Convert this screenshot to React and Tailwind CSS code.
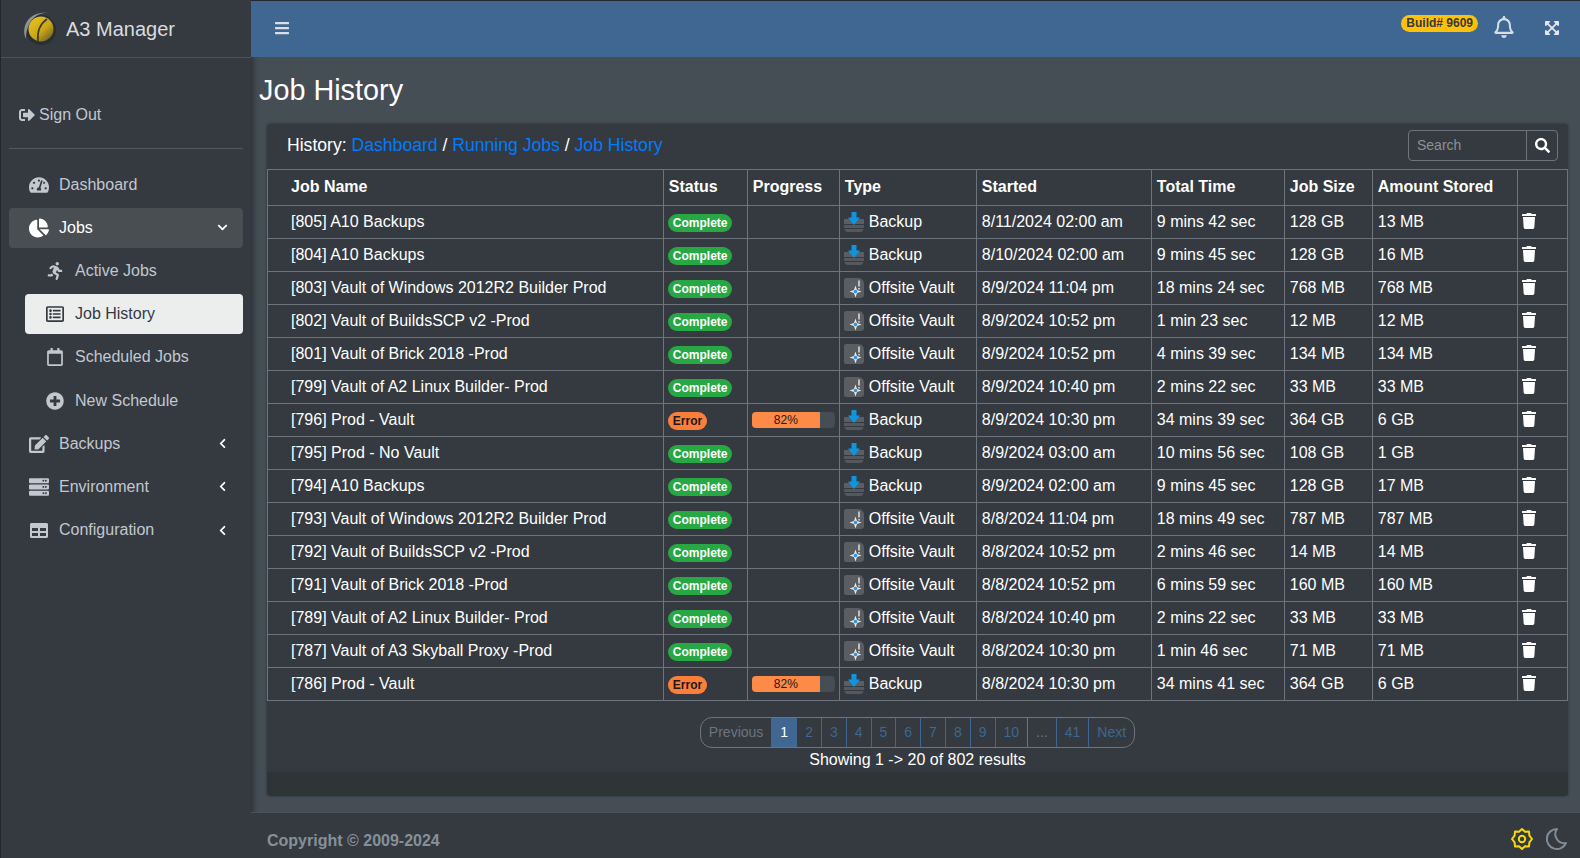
import {
  FaBars,
  FaChartPie,
  FaChevronDown,
  FaChevronLeft,
  FaEdit,
  FaExpandArrowsAlt,
  FaPlusCircle,
  FaRegBell,
  FaRegCalendar,
  FaRegListAlt,
  FaRunning,
  FaSearch,
  FaServer,
  FaSignOutAlt,
  FaTachometerAlt,
  FaTrash,
} from "react-icons/fa";

const jobs = [
  ["[805] A10 Backups", "Complete", "Backup", "8/11/2024 02:00 am", "9 mins 42 sec", "128 GB", "13 MB"],
  ["[804] A10 Backups", "Complete", "Backup", "8/10/2024 02:00 am", "9 mins 45 sec", "128 GB", "16 MB"],
  ["[803] Vault of Windows 2012R2 Builder Prod", "Complete", "Offsite Vault", "8/9/2024 11:04 pm", "18 mins 24 sec", "768 MB", "768 MB"],
  ["[802] Vault of BuildsSCP v2 -Prod", "Complete", "Offsite Vault", "8/9/2024 10:52 pm", "1 min 23 sec", "12 MB", "12 MB"],
  ["[801] Vault of Brick 2018 -Prod", "Complete", "Offsite Vault", "8/9/2024 10:52 pm", "4 mins 39 sec", "134 MB", "134 MB"],
  ["[799] Vault of A2 Linux Builder- Prod", "Complete", "Offsite Vault", "8/9/2024 10:40 pm", "2 mins 22 sec", "33 MB", "33 MB"],
  ["[796] Prod - Vault", "Error", "Backup", "8/9/2024 10:30 pm", "34 mins 39 sec", "364 GB", "6 GB"],
  ["[795] Prod - No Vault", "Complete", "Backup", "8/9/2024 03:00 am", "10 mins 56 sec", "108 GB", "1 GB"],
  ["[794] A10 Backups", "Complete", "Backup", "8/9/2024 02:00 am", "9 mins 45 sec", "128 GB", "17 MB"],
  ["[793] Vault of Windows 2012R2 Builder Prod", "Complete", "Offsite Vault", "8/8/2024 11:04 pm", "18 mins 49 sec", "787 MB", "787 MB"],
  ["[792] Vault of BuildsSCP v2 -Prod", "Complete", "Offsite Vault", "8/8/2024 10:52 pm", "2 mins 46 sec", "14 MB", "14 MB"],
  ["[791] Vault of Brick 2018 -Prod", "Complete", "Offsite Vault", "8/8/2024 10:52 pm", "6 mins 59 sec", "160 MB", "160 MB"],
  ["[789] Vault of A2 Linux Builder- Prod", "Complete", "Offsite Vault", "8/8/2024 10:40 pm", "2 mins 22 sec", "33 MB", "33 MB"],
  ["[787] Vault of A3 Skyball Proxy -Prod", "Complete", "Offsite Vault", "8/8/2024 10:30 pm", "1 min 46 sec", "71 MB", "71 MB"],
  ["[786] Prod - Vault", "Error", "Backup", "8/8/2024 10:30 pm", "34 mins 41 sec", "364 GB", "6 GB"],
];

const headers = ["Job Name", "Status", "Progress", "Type", "Started", "Total Time", "Job Size", "Amount Stored", ""];
const pages = ["1", "2", "3", "4", "5", "6", "7", "8", "9", "10", "...", "41"];

const Logo = () => (
  <svg width="38" height="38" viewBox="0 0 38 38">
    <defs>
      <linearGradient id="disc" x1="0.2" y1="0.1" x2="0.9" y2="0.9">
        <stop offset="0" stopColor="#e3c01c" />
        <stop offset="0.55" stopColor="#c9a518" />
        <stop offset="1" stopColor="#6f6426" />
      </linearGradient>
    </defs>
    <circle cx="21" cy="20" r="15" fill="#23272b" opacity="0.6" />
    <circle cx="21" cy="19" r="12.500" fill="url(#disc)" />
    <path d="M6 29C0 16 10 0 28 3C16 2 6 12 6 29z" fill="#8f9296" />
    <path d="M18 31c-1-9 2-17 9-22" fill="none" stroke="#3f3c2a" strokeWidth="1.600" />
  </svg>
);

const BackupIcon = () => (
  <svg width="20" height="20" viewBox="0 0 20 20" className="shrink-0">
    <path d="M1 7h18c.6 0 1 .4 1 1v4H0V8c0-.6.4-1 1-1z" fill="#5b5f63" />
    <path d="M0 13h20v3H0z" fill="#55595d" />
    <path d="M0.500 17h19c-.4 1.800-1.500 3-3 3h-13c-1.500 0-2.600-1.200-3-3z" fill="#55595d" />
    <path d="M7.500 0h5v5.500H16L10 13 4 5.500h3.500z" fill="#0f94df" />
  </svg>
);

const VaultIcon = () => (
  <svg width="20" height="20" viewBox="0 0 20 20" className="shrink-0">
    <path d="M2 0h12c4 0 6 3 6 6v11c0 2-1 3-3 3H2c-1 0-2-1-2-2V2C0 1 1 0 2 0z" fill="#5a5d61" />
    <path d="M15 2.500v6" stroke="#dfe1e3" strokeWidth="1.500" />
    <path d="M15 10v1.500" stroke="#dfe1e3" strokeWidth="1.500" />
    <path d="M11.500 7.500l1.500 4.500 4.500 1.500-4.500 1.500-1.500 4.500-1.500-4.500-4.500-1.500 4.500-1.500z" fill="#e8ebee" />
    <circle cx="11.500" cy="13.500" r="1.800" fill="#2f93e0" />
  </svg>
);

const TableIcon = ({ className }) => (
  <svg viewBox="0 0 18 15" className={className} width="18" height="15">
    <path
      fillRule="evenodd"
      d="M1.500 0h15c.8 0 1.500.7 1.500 1.500v12c0 .8-.7 1.500-1.500 1.500h-15C.7 15 0 14.300 0 13.500v-12C0 .7.700 0 1.500 0zM2 5v3h6V5zm8 0v3h6V5zM2 10v3h6v-3zm8 0v3h6v-3z"
      fill="currentColor"
    />
  </svg>
);

const Gear = () => (
  <svg width="24" height="24" viewBox="0 0 24 24" fill="none" stroke="#f5d90a" strokeWidth="2">
    <path d="M12 2l3 2.800 4-.2.400 4 2.600 3.400-2.600 3.400-.400 4-4-.2L12 22l-3-2.800-4 .2-.400-4L2 12l2.600-3.400.400-4 4 .2z" strokeLinejoin="round" />
    <circle cx="12" cy="12" r="3.200" />
  </svg>
);

const Moon = () => (
  <svg width="24" height="24" viewBox="0 0 24 24" fill="none" stroke="#7f8c97" strokeWidth="2">
    <path d="M13 2a10 10 0 1 0 9 14A9 9 0 0 1 13 2z" strokeLinejoin="round" />
  </svg>
);

const SideItem = ({ icon: Icon, label, open, active, arrow }) => (
  <div
    className={`mb-[3.2px] flex h-10 items-center rounded pl-[19px] pr-[15px] ${active ? "bg-[#494e53] text-white" : "text-[#c2c7d0]"}`}
  >
    <span className="flex w-[22px] shrink-0 justify-center text-[20px]">
      <Icon />
    </span>
    <span className="ml-[9px] flex-1">{label}</span>
    {arrow && (open ? <FaChevronDown className="text-[11px] text-white" /> : <FaChevronLeft className="text-[11px] text-white" />)}
  </div>
);

const SubItem = ({ icon: Icon, label, active }) => (
  <div
    className={`mb-[3.2px] ml-4 flex h-10 items-center rounded pl-5 ${active ? "bg-[#eceeee] text-[#343a40]" : "text-[#c2c7d0]"}`}
  >
    <Icon className="w-[20px] shrink-0 text-[18px]" />
    <span className="ml-[10px]">{label}</span>
  </div>
);

const Sidebar = () => (
  <aside className="flex w-[251px] shrink-0 flex-col border-l border-[#24282c] bg-[#343a40] shadow-[2px_0_6px_rgba(0,0,0,0.4)]">
    <div className="flex h-[58px] items-center border-b border-[#4b545c] pl-[19px]">
      <Logo />
      <span className="ml-[8px] text-[20px] text-[#d9dcdf]">A3 Manager</span>
    </div>
    <div className="mx-2 flex h-[91px] items-center border-b border-[#4f5962] pl-[10px] pt-[24px] text-[#c2c7d0]">
      <FaSignOutAlt className="text-[16px]" />
      <span className="ml-[4px]">Sign Out</span>
    </div>
    <nav className="mx-2 mt-[15.6px]">
      <SideItem icon={FaTachometerAlt} label="Dashboard" />
      <SideItem icon={FaChartPie} label="Jobs" active arrow open />
      <SubItem icon={FaRunning} label="Active Jobs" />
      <SubItem icon={FaRegListAlt} label="Job History" active />
      <SubItem icon={FaRegCalendar} label="Scheduled Jobs" />
      <SubItem icon={FaPlusCircle} label="New Schedule" />
      <SideItem icon={FaEdit} label="Backups" arrow />
      <SideItem icon={FaServer} label="Environment" arrow />
      <SideItem icon={TableIcon} label="Configuration" arrow />
    </nav>
  </aside>
);

const StatusBadge = ({ status }) =>
  status === "Complete" ? (
    <span className="-ml-px inline-block rounded-full bg-[#28a745] px-[5px] py-[1px] text-[12px] font-bold leading-[16px] text-white">
      Complete
    </span>
  ) : (
    <span className="-ml-px inline-block rounded-full bg-[#fd7e3a] px-[5px] py-[1px] text-[12px] font-bold leading-[16px] text-[#1a1a1a]">
      Error
    </span>
  );

const Row = ({ job }) => {
  const [name, status, type, started, total, size, stored] = job;
  const cell = "border-t border-l border-[#6c757d] px-[4.8px] align-middle";
  return (
    <tr className="h-[33px]">
      <td className={`${cell} pl-[23px]`}>{name}</td>
      <td className={cell}>
        <StatusBadge status={status} />
      </td>
      <td className={cell}>
        {status === "Error" && (
          <div className="-ml-px flex h-4 w-[83px] overflow-hidden rounded bg-[#454d55] text-[12px] leading-4 text-[#1a1a1a]">
            <div className="w-[68px] bg-[#fd8b47] text-center">82%</div>
          </div>
        )}
      </td>
      <td className={cell}>
        <div className="-ml-px flex items-center gap-[5px]">
          {type === "Backup" ? <BackupIcon /> : <VaultIcon />}
          <span>{type}</span>
        </div>
      </td>
      <td className={cell}>{started}</td>
      <td className={cell}>{total}</td>
      <td className={cell}>{size}</td>
      <td className={cell}>{stored}</td>
      <td className={`${cell} border-r`}>
        <FaTrash className="-mt-[2px] -ml-[2px] text-[16px] text-white" />
      </td>
    </tr>
  );
};

const Pagination = () => (
  <div className="flex h-[31px] overflow-hidden rounded-[12px] border border-[#6c757d] text-[14px] text-[#3f6791]">
    <span className="flex items-center px-2 text-[#6c757d]">Previous</span>
    {pages.map((p) => (
      <span
        key={p}
        className={`flex items-center border-l px-2 ${p === "..." ? "border-[#6c757d] text-[#6c757d]" : "border-[#3f6791]"} ${p === "1" ? "bg-[#3f6791] text-white" : ""}`}
      >
        {p}
      </span>
    ))}
    <span className="flex items-center border-l border-[#3f6791] px-2">Next</span>
  </div>
);

export default function App() {
  return (
    <div className="flex h-[858px] w-[1580px] overflow-hidden bg-[#454d55] font-['Liberation_Sans',Arial,sans-serif] text-[16px] text-white">
      <Sidebar />
      <div className="flex min-w-0 flex-1 flex-col">
        <header className="flex h-[57px] items-center border-t border-[#24282c] bg-[#3f6791] pb-[2px] pl-[23px] pr-[20px]">
          <FaBars className="text-[16px] text-[#d9dfe5]" />
          <span className="mb-[9px] ml-auto rounded-full bg-[#ffc107] px-[5px] text-[12px] font-bold leading-[17px] text-[#343a40]">
            Build# 9609
          </span>
          <FaRegBell className="-mt-[2px] ml-[15px] text-[22px] text-[#d7dde3]" />
          <FaExpandArrowsAlt className="ml-[29px] text-[16px] text-[#e4e8ec]" />
        </header>

        <main className="flex flex-1 flex-col pl-[8px] pr-[12px]">
          <h1 className="h-[67px] pt-[14px] text-[28.8px] leading-[38px]">Job History</h1>
          <section className="ml-[8px] flex h-[672px] flex-col rounded bg-[#343a40] shadow-[0_0_3px_rgba(0,0,0,0.4)]">
            <div className="flex h-[46px] items-center pl-[20px] pr-[10px]">
              <p className="-mt-[2px] text-[17.6px]">
                History: <a className="text-[#007bff]">Dashboard</a> / <a className="text-[#007bff]">Running Jobs</a> /{" "}
                <a className="text-[#007bff]">Job History</a>
              </p>
              <div className="-mt-[2px] ml-auto flex h-[31px] w-[150px] rounded border border-[#6c757d]">
                <span className="flex-1 self-center pl-2 text-[14px] text-[#8a9198]">Search</span>
                <span className="flex w-[31px] items-center justify-center border-l border-[#6c757d]">
                  <FaSearch className="text-[15px]" />
                </span>
              </div>
            </div>
            <table className="w-[1301px] table-fixed border-separate border-spacing-0 border-b border-[#6c757d] text-left">
              <colgroup>
                <col className="w-[396px]" />
                <col className="w-[84px]" />
                <col className="w-[92px]" />
                <col className="w-[137px]" />
                <col className="w-[175px]" />
                <col className="w-[133px]" />
                <col className="w-[88px]" />
                <col className="w-[145px]" />
                <col className="w-[51px]" />
              </colgroup>
              <thead>
                <tr className="h-[36px]">
                  {headers.map((h, i) => (
                    <th
                      key={h || "del"}
                      className={`border-t border-l border-[#6c757d] px-[4.8px] pb-[2px] font-bold ${i === 0 ? "pl-[23px]" : ""} ${i === 8 ? "border-r" : ""}`}
                    >
                      {h}
                    </th>
                  ))}
                </tr>
              </thead>
              <tbody>
                {jobs.map((job, i) => (
                  <Row key={job[0] + i} job={job} />
                ))}
              </tbody>
            </table>
            <div className="flex flex-col items-center pt-4">
              <Pagination />
              <p>Showing 1 -&gt; 20 of 802 results</p>
            </div>
            <div className="mt-auto h-6 rounded-b bg-[#2f3437]" />
          </section>
        </main>

        <footer className="flex h-[46px] items-center border-t border-[#4b545c] bg-[#343a40] pl-[16px] pr-[12px] pt-[10px]">
          <span className="font-bold text-[#869099]">Copyright © 2009-2024</span>
          <span className="-mt-[4px] ml-auto flex items-center gap-[10px]">
            <Gear />
            <Moon />
          </span>
        </footer>
      </div>
    </div>
  );
}
